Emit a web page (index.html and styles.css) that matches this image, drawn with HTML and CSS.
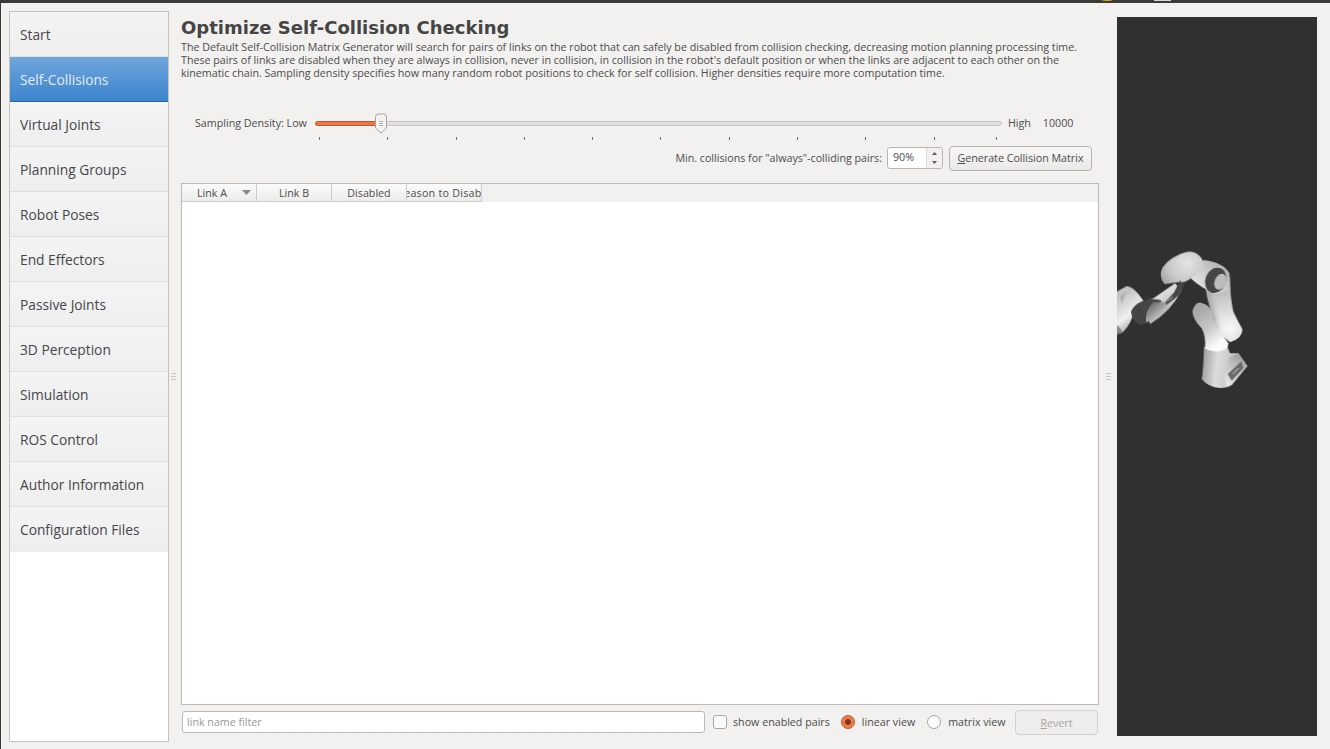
FILE: index.html
```html
<!DOCTYPE html>
<html lang="en">
<head>
    <meta charset="UTF-8">
    <meta name="viewport" content="width=device-width, initial-scale=1.0">
    <title>MoveIt Setup Assistant</title>
    <link rel="stylesheet" href="styles.css">
</head>
<body>
    <span class="bar-mark colored"></span>
    <span class="bar-mark pale"></span>
    <div class="window">
        <nav class="nav-list">
            <div class="nav-item">Start</div>
            <div class="nav-item selected">Self-Collisions</div>
            <div class="nav-item">Virtual Joints</div>
            <div class="nav-item">Planning Groups</div>
            <div class="nav-item">Robot Poses</div>
            <div class="nav-item">End Effectors</div>
            <div class="nav-item">Passive Joints</div>
            <div class="nav-item">3D Perception</div>
            <div class="nav-item">Simulation</div>
            <div class="nav-item">ROS Control</div>
            <div class="nav-item">Author Information</div>
            <div class="nav-item">Configuration Files</div>
        </nav>

        <div class="splitter"><span class="grip"></span></div>

        <main class="content">
            <h1>Optimize Self-Collision Checking</h1>
            <p class="description">The Default Self-Collision Matrix Generator will search for pairs of links on the robot that can safely be disabled from collision checking, decreasing motion planning processing time.<br>These pairs of links are disabled when they are always in collision, never in collision, in collision in the robot's default position or when the links are adjacent to each other on the<br>kinematic chain. Sampling density specifies how many random robot positions to check for self collision. Higher densities require more computation time.</p>

            <div class="density-row">
                <span>Sampling Density: Low</span>
                <div class="slider">
                    <div class="groove">
                        <div class="groove-fill"></div>
                        <svg class="handle" width="14" height="22" viewBox="0 0 14 22">
                            <path d="M1.5 4 Q1.5 1 4.5 1 H9.5 Q12.500 1 12.500 4 V15 L7 20 L1.500 15 Z" fill="#f3f2f1" stroke="#a8a59f"/>
                            <path d="M5 8.500 H9 M5 10.500 H9 M5 12.500 H9" stroke="#b5b2ac"/>
                        </svg>
                    </div>
                    <div class="ticks">
                        <i></i><i></i><i></i><i></i><i></i><i></i><i></i><i></i><i></i><i></i><i></i>
                    </div>
                </div>
                <span>High</span>
                <span class="density-value">10000</span>
            </div>

            <div class="generate-row">
                <span>Min. collisions for "always"-colliding pairs:</span>
                <div class="spinbox">
                    <span class="spin-value">90%</span>
                    <div class="spin-arrows">
                        <svg width="5" height="3" viewBox="0 0 5 3"><path d="M2.500 0 L5 3 H0 Z" fill="#5c5b56"/></svg>
                        <svg width="5" height="3" viewBox="0 0 5 3"><path d="M0 0 H5 L2.500 3 Z" fill="#5c5b56"/></svg>
                    </div>
                </div>
                <button class="button generate"><u>G</u>enerate Collision Matrix</button>
            </div>

            <div class="table">
                <div class="table-head">
                    <div class="col sorted">Link A
                        <svg width="9" height="5" viewBox="0 0 9 5"><path d="M0 0 H9 L4.500 5 Z" fill="#8a8882"/></svg>
                    </div>
                    <div class="col">Link B</div>
                    <div class="col">Disabled</div>
                    <div class="col clipped"><span>Reason to Disable</span></div>
                </div>
            </div>

            <div class="bottom-row">
                <div class="filter">link name filter</div>
                <label class="option first"><span class="checkbox"></span>show enabled pairs</label>
                <label class="option"><span class="radio checked"></span>linear view</label>
                <label class="option last"><span class="radio"></span>matrix view</label>
                <button class="button revert" disabled><u>R</u>evert</button>
            </div>
        </main>

        <div class="splitter right"><span class="grip"></span></div>

        <section class="viewport">
            <!-- coordinates are 3x screen pixels -->
            <svg class="robot" width="153" height="170" viewBox="51 0 459 510">
                <defs>
                    <filter id="soft" x="-30%" y="-30%" width="160%" height="160%"><feGaussianBlur stdDeviation="9"/></filter>
                    <filter id="edge"><feGaussianBlur stdDeviation="1.500"/></filter>
                    <linearGradient id="baseFill" gradientUnits="userSpaceOnUse" x1="305" y1="420" x2="400" y2="430">
                        <stop offset="0" stop-color="#a0a0a0"/>
                        <stop offset="0.45" stop-color="#dcdcdc"/>
                        <stop offset="1" stop-color="#c4c4c4"/>
                    </linearGradient>
                    <linearGradient id="plateFill" gradientUnits="userSpaceOnUse" x1="380" y1="460" x2="430" y2="390">
                        <stop offset="0" stop-color="#e8e8e8"/>
                        <stop offset="1" stop-color="#a6a6a6"/>
                    </linearGradient>
                    <radialGradient id="columnFill" gradientUnits="userSpaceOnUse" cx="390" cy="295" r="175">
                        <stop offset="0" stop-color="#fafafa"/>
                        <stop offset="0.35" stop-color="#d8d8d8"/>
                        <stop offset="1" stop-color="#a0a0a0"/>
                    </radialGradient>
                    <linearGradient id="backLink" gradientUnits="userSpaceOnUse" x1="280" y1="250" x2="350" y2="345">
                        <stop offset="0" stop-color="#a8a8a8"/>
                        <stop offset="0.5" stop-color="#c5c5c5"/>
                        <stop offset="1" stop-color="#fbfbfb"/>
                    </linearGradient>
                    <linearGradient id="elbowFill" gradientUnits="userSpaceOnUse" x1="280" y1="170" x2="350" y2="90">
                        <stop offset="0" stop-color="#e8e8e8"/>
                        <stop offset="1" stop-color="#b4b4b4"/>
                    </linearGradient>
                    <radialGradient id="armFill" gradientUnits="userSpaceOnUse" cx="262" cy="100" r="95">
                        <stop offset="0" stop-color="#e4e4e4"/>
                        <stop offset="0.6" stop-color="#c8c8c8"/>
                        <stop offset="1" stop-color="#a2a2a2"/>
                    </radialGradient>
                    <linearGradient id="foreFill" gradientUnits="userSpaceOnUse" x1="180" y1="195" x2="215" y2="250">
                        <stop offset="0" stop-color="#dedede"/>
                        <stop offset="1" stop-color="#b0b0b0"/>
                    </linearGradient>
                    <linearGradient id="handFill" gradientUnits="userSpaceOnUse" x1="60" y1="200" x2="125" y2="290">
                        <stop offset="0" stop-color="#c4c4c4"/>
                        <stop offset="0.55" stop-color="#f2f2f2"/>
                        <stop offset="1" stop-color="#8d8d8d"/>
                    </linearGradient>
                    <linearGradient id="wristFill" gradientUnits="userSpaceOnUse" x1="150" y1="225" x2="185" y2="265">
                        <stop offset="0" stop-color="#6e6e6e"/>
                        <stop offset="1" stop-color="#d2d2d2"/>
                    </linearGradient>
                    <clipPath id="columnClip"><path d="M315 150 Q318 210 340 260 Q350 310 390 337 Q428 325 427 298 Q412 270 400 245 Q390 200 390 140 Z"/></clipPath>
                </defs>
                <g filter="url(#edge)">
                    <!-- base -->
                    <path d="M380 345 L390 370 L415 370 L442 408 L395 465 Q385 474 360 474 Q325 472 305 447 Q310 420 312 350 Z" fill="url(#baseFill)"/>
                    <path d="M388 382 L415 370 L442 408 L395 465 L378 468 L375 440 Z" fill="url(#plateFill)"/>
                    <path d="M383 432 L424 394 L430 414 L395 452 Z" fill="#6a6a6a"/>
                    <path d="M398 432 L416 414" stroke="#c9c9c9" stroke-width="3"/>
                    <!-- lower link and shoulder column -->
                    <path d="M277 245 Q285 215 303 218 Q335 225 340 262 L350 290 L385 340 Q386 362 350 365 Q322 362 315 355 Q318 320 305 295 Q280 270 277 245 Z" fill="url(#backLink)"/>
                    <path d="M315 150 Q318 210 340 260 Q350 310 390 337 Q428 325 427 298 Q412 270 400 245 Q390 200 390 140 Z" fill="url(#columnFill)"/>
                    <g clip-path="url(#columnClip)">
                        <path d="M318 170 L340 260 L350 300 L310 260 Z" fill="#909090" filter="url(#soft)"/>
                    </g>
                    <!-- elbow -->
                    <path d="M310 90 Q372 98 388 130 L390 180 L345 192 Q300 172 272 145 Z" fill="url(#elbowFill)"/>
                    <ellipse cx="347" cy="151" rx="31" ry="39" transform="rotate(22 347 151)" fill="#454545"/>
                    <ellipse cx="361" cy="155" rx="17" ry="25" transform="rotate(22 361 155)" fill="#bcbcbc"/>
                    <!-- upper arm -->
                    <path d="M183 125 Q190 95 240 72 Q282 52 305 85 Q316 105 300 125 L265 150 Q250 160 235 156 L195 162 Q180 150 183 125 Z" fill="url(#armFill)"/>
                    <!-- forearm -->
                    <path d="M225 160 L160 205 L130 215 L150 282 Q215 242 245 180 Z" fill="url(#foreFill)"/>
                    <path d="M240 152 L253 164 L236 196 L198 226 L190 222 L222 188 Z" fill="#454545"/>
                    <path d="M198 214 L220 197 L216 206 L201 216 Z" fill="#8c8c8c"/>
                    <!-- hand -->
                    <path d="M51 185 L80 168 Q102 170 125 205 L132 214 L100 255 Q82 300 62 310 L51 312 Z" fill="url(#handFill)"/>
                    <path d="M60 200 L78 185 L66 222 Z" fill="#a5a5a5" opacity="0.7"/>
                    <path d="M51 285 Q62 292 66 306 L58 310 L51 312 Z" fill="#55565a" opacity="0.6"/>
                    <!-- wrist -->
                    <path d="M93 245 Q100 225 130 212 Q165 203 185 212 Q165 240 148 272 Q135 285 118 284 Q95 272 93 245 Z" fill="#454545"/>
                    <path d="M138 276 Q134 240 160 216 L196 216 Q206 226 186 246 Q162 272 138 276 Z" fill="url(#wristFill)"/>
                </g>
            </svg>
        </section>
    </div>
</body>
</html>
```

FILE: styles.css
```css
* {
    box-sizing: border-box;
}

body {
    margin: 0;
    height: 749px;
    overflow: hidden;
    background-color: #f2f1f0;
    font-family: "Open Sans", sans-serif;
    font-size: 10.700px;
    color: #4c4c4c;
}

.bar-mark {
    position: absolute;
    top: 0;
    height: 1px;
}

.bar-mark.colored {
    left: 1102px;
    width: 10px;
    background: linear-gradient(90deg, #3f8f3c, #d9b52c, #c9652a);
}

.bar-mark.pale {
    left: 1154px;
    width: 17px;
    background-color: #d8d6d2;
}

.window {
    display: flex;
    height: 749px;
    padding: 8px 13px 7px 8px;
    border-top: 3px solid #3c3b37;
    border-left: 1px solid #3c3b37;
}

.nav-list {
    width: 160px;
    height: 731px;
    flex-shrink: 0;
    background-color: #fff;
    border: 1px solid #c4c1bb;
}

.nav-item {
    height: 45px;
    padding-left: 10px;
    display: flex;
    align-items: center;
    font-size: 13.750px;
    color: #45464a;
    background: linear-gradient(#f4f4f4, #eeeeee);
    border-bottom: 1px solid #e0dfdd;
}

.nav-item.selected {
    color: #e4edf6;
    background: linear-gradient(#6fa5dc, #3c84cd);
    border-bottom: 1px solid #2a69a8;
}

.nav-item:last-child {
    border-bottom: none;
}

.splitter {
    width: 12px;
    display: flex;
    align-items: center;
    padding-left: 2px;
}

.splitter.right {
    width: 18px;
    justify-content: center;
    padding-left: 0;
}

.grip {
    width: 5px;
    height: 7px;
    border-top: 1px solid #c9c7c2;
    border-bottom: 1px solid #c9c7c2;
    background: linear-gradient(#c9c7c2, #c9c7c2) center / 100% 1px no-repeat;
}

.content {
    width: 918px;
    flex-shrink: 0;
    display: flex;
    flex-direction: column;
}

h1 {
    margin: 5px 0 0;
    font-family: "DejaVu Sans", sans-serif;
    font-size: 18px;
    line-height: 24px;
    color: #454545;
}

.description {
    margin: 1px 0 0;
    line-height: 13px;
    white-space: nowrap;
}

.density-row {
    display: flex;
    align-items: center;
    margin-top: 32px;
    padding-left: 14px;
    height: 22px;
    white-space: nowrap;
}

.slider {
    position: relative;
    width: 687px;
    height: 22px;
    margin: 0 6px 0 8px;
}

.groove {
    position: relative;
    height: 5px;
    margin-top: 9px;
    border-radius: 3px;
    background-color: #e3e1de;
    border: 1px solid #c6c3bd;
    box-shadow: 0 1px 0 #fbfafa;
}

.groove-fill {
    width: 62px;
    height: 5px;
    margin: -1px 0 0 -1px;
    border-radius: 3px;
    background-color: #f07746;
    border: 1px solid #c7532a;
}

.handle {
    position: absolute;
    top: -9px;
    left: 58px;
}

.ticks {
    display: flex;
    margin: 11px 4px 0;
}

.ticks i {
    display: block;
    width: 1px;
    height: 3px;
    margin-right: 67.300px;
    background-color: #6f6e6a;
}

.ticks i:nth-last-child(2) {
    margin-right: 61px;
}

.ticks i:last-child {
    margin-right: 0;
}

.density-value {
    margin-left: 12px;
}

.generate-row {
    display: flex;
    align-items: center;
    justify-content: flex-end;
    height: 26px;
    margin-top: 11px;
    padding-right: 7px;
    white-space: nowrap;
}

.spinbox {
    display: flex;
    width: 56px;
    height: 22px;
    margin: 0 6px 0 5px;
    background-color: #fff;
    border: 1px solid #b9b6b0;
    border-radius: 3px;
}

.spin-value {
    flex: 1;
    padding-left: 5px;
    line-height: 19px;
}

.spin-arrows {
    width: 16px;
    display: flex;
    flex-direction: column;
    align-items: center;
    justify-content: space-between;
    padding: 4px 0;
    background-color: #f2f1f0;
    border-left: 1px solid #dddbd7;
    border-radius: 0 3px 3px 0;
}

.button {
    height: 25px;
    padding: 0;
    font-family: inherit;
    font-size: inherit;
    color: #4c4c4c;
    background: linear-gradient(#f8f7f7, #ebe9e7);
    border: 1px solid #b5b2ac;
    border-radius: 4px;
}

.button.generate {
    width: 143px;
}

.table {
    flex: 1;
    margin-top: 12px;
    background-color: #fff;
    border: 1px solid #bdbab4;
}

.table-head {
    display: flex;
    height: 18px;
    background-color: #f2f1f0;
}

.col {
    width: 75px;
    height: 18px;
    display: flex;
    align-items: center;
    justify-content: center;
    background: linear-gradient(#fbfbfb, #ececeb);
    border-right: 1px solid #cfcdc8;
    border-bottom: 1px solid #cfcdc8;
}

.col.sorted {
    padding-left: 10px;
    gap: 15px;
}

.col.clipped {
    overflow: hidden;
}

.col.clipped span {
    white-space: nowrap;
    letter-spacing: 0.250px;
}

.bottom-row {
    display: flex;
    align-items: center;
    height: 24px;
    margin: 5px 1px 8px;
    white-space: nowrap;
}

.filter {
    width: 523px;
    height: 22px;
    padding-left: 4px;
    line-height: 20px;
    color: #9a9a96;
    background-color: #fff;
    border: 1px solid #bdbab4;
    border-radius: 3px;
}

.option {
    display: flex;
    align-items: center;
    margin-left: 11px;
}

.option.first {
    margin-left: 8px;
}

.option.last {
    margin-left: 12px;
}

.checkbox {
    width: 14px;
    height: 14px;
    margin-right: 6px;
    background-color: #fbfbfb;
    border: 1px solid #a9a69f;
    border-radius: 3px;
}

.radio {
    width: 14px;
    height: 14px;
    margin-right: 7px;
    background-color: #fbfbfb;
    border: 1px solid #a9a69f;
    border-radius: 50%;
}

.radio.checked {
    border-color: #c7532a;
    background: radial-gradient(circle, #7a3a20 0 2.500px, #ee7a4c 3.500px);
}

.button.revert {
    width: 83px;
    height: 25px;
    margin: 1px 0 0 auto;
    color: #a7a6a2;
    background: #efeeec;
    border-color: #d3d1cc;
}

.viewport {
    width: 200px;
    height: 719px;
    margin-top: 6px;
    flex-shrink: 0;
    background-color: #303030;
    overflow: hidden;
    position: relative;
}

.robot {
    position: absolute;
    left: 0;
    top: 213px;
}
```
